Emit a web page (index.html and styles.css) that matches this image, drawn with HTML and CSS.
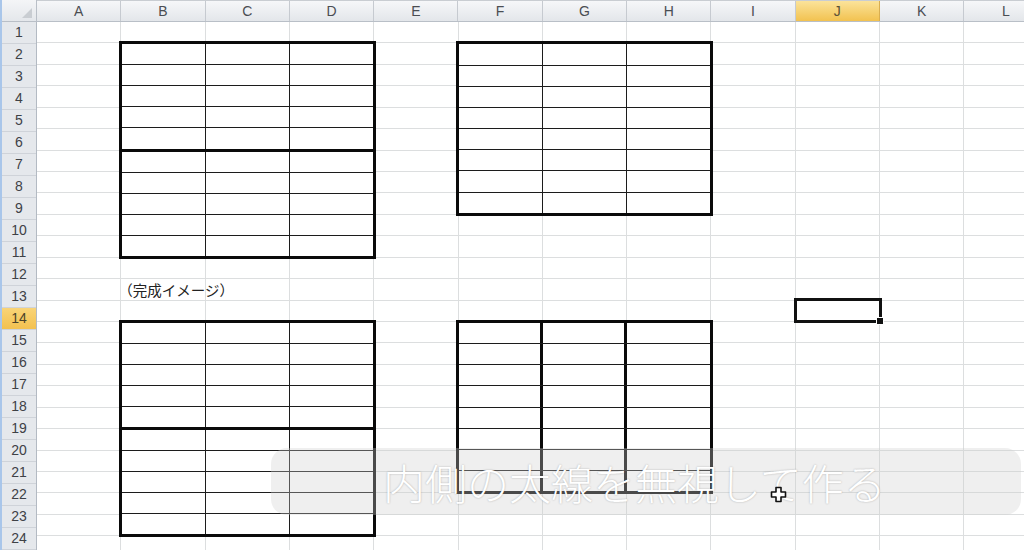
FILE: index.html
```html
<!DOCTYPE html>
<html lang="ja">
<head>
  <meta charset="UTF-8">
  <title>罫線 - Excel</title>
  <link rel="stylesheet" href="styles.css">
</head>
<body>
  <div class="sheet">
    <div class="corner"><span class="corner-mark"></span></div>

    <div class="col-heads">
      <div class="col-head">A</div>
      <div class="col-head">B</div>
      <div class="col-head">C</div>
      <div class="col-head">D</div>
      <div class="col-head">E</div>
      <div class="col-head">F</div>
      <div class="col-head">G</div>
      <div class="col-head">H</div>
      <div class="col-head">I</div>
      <div class="col-head active">J</div>
      <div class="col-head">K</div>
      <div class="col-head">L</div>
    </div>

    <div class="row-heads">
      <div class="row-head">1</div>
      <div class="row-head">2</div>
      <div class="row-head">3</div>
      <div class="row-head">4</div>
      <div class="row-head">5</div>
      <div class="row-head">6</div>
      <div class="row-head">7</div>
      <div class="row-head">8</div>
      <div class="row-head">9</div>
      <div class="row-head">10</div>
      <div class="row-head">11</div>
      <div class="row-head">12</div>
      <div class="row-head">13</div>
      <div class="row-head active">14</div>
      <div class="row-head">15</div>
      <div class="row-head">16</div>
      <div class="row-head">17</div>
      <div class="row-head">18</div>
      <div class="row-head">19</div>
      <div class="row-head">20</div>
      <div class="row-head">21</div>
      <div class="row-head">22</div>
      <div class="row-head">23</div>
      <div class="row-head">24</div>
      <div class="row-head">25</div>
    </div>

    <div class="cells">
      <!-- B2:D11 -->
      <div class="box t1">
        <div class="r"><i></i><i></i><i></i></div>
        <div class="r"><i></i><i></i><i></i></div>
        <div class="r"><i></i><i></i><i></i></div>
        <div class="r"><i></i><i></i><i></i></div>
        <div class="r split"><i></i><i></i><i></i></div>
        <div class="r"><i></i><i></i><i></i></div>
        <div class="r"><i></i><i></i><i></i></div>
        <div class="r"><i></i><i></i><i></i></div>
        <div class="r"><i></i><i></i><i></i></div>
        <div class="r"><i></i><i></i><i></i></div>
      </div>

      <!-- F2:H9 -->
      <div class="box t2">
        <div class="r"><i></i><i></i><i></i></div>
        <div class="r"><i></i><i></i><i></i></div>
        <div class="r"><i></i><i></i><i></i></div>
        <div class="r"><i></i><i></i><i></i></div>
        <div class="r"><i></i><i></i><i></i></div>
        <div class="r"><i></i><i></i><i></i></div>
        <div class="r"><i></i><i></i><i></i></div>
        <div class="r"><i></i><i></i><i></i></div>
      </div>

      <div class="label">（完成イメージ）</div>

      <!-- B15:D24 -->
      <div class="box t3">
        <div class="r"><i></i><i></i><i></i></div>
        <div class="r"><i></i><i></i><i></i></div>
        <div class="r"><i></i><i></i><i></i></div>
        <div class="r"><i></i><i></i><i></i></div>
        <div class="r split"><i></i><i></i><i></i></div>
        <div class="r"><i></i><i></i><i></i></div>
        <div class="r"><i></i><i></i><i></i></div>
        <div class="r"><i></i><i></i><i></i></div>
        <div class="r"><i></i><i></i><i></i></div>
        <div class="r"><i></i><i></i><i></i></div>
      </div>

      <!-- F15:H22 -->
      <div class="box t4">
        <div class="r"><i></i><i></i><i></i></div>
        <div class="r"><i></i><i></i><i></i></div>
        <div class="r"><i></i><i></i><i></i></div>
        <div class="r"><i></i><i></i><i></i></div>
        <div class="r"><i></i><i></i><i></i></div>
        <div class="r"><i></i><i></i><i></i></div>
        <div class="r"><i></i><i></i><i></i></div>
        <div class="r"><i></i><i></i><i></i></div>
      </div>

      <div class="active-cell"><span class="fill-handle"></span></div>
    </div>
  </div>

  <div class="subtitle">内側の太線を無視して作る</div>

  <svg class="cursor" width="17" height="17" viewBox="0 0 17 17">
    <path d="M6 1.5h5v4.5h4.5v5H11v4.5H6V11H1.5V6H6z" fill="#fff" stroke="#111" stroke-width="1.6" stroke-linejoin="round"/>
  </svg>
</body>
</html>
```

FILE: styles.css
```css
body { margin: 0; background: #fff; overflow: hidden; font-family: "Liberation Sans", Arial, sans-serif; }

.sheet { display: grid; grid-template-columns: 35px 1fr; grid-template-rows: 22px 1fr; height: 550px; border-left: 2px solid #a9c6ea; }

.corner { position: relative; background: linear-gradient(#f4f5f7, #e4e7eb); border-right: 1px solid #b9bfc7; border-bottom: 1px solid #b9bfc7; }
.corner-mark { position: absolute; right: 4px; bottom: 3px; width: 0; height: 0; border-left: 10px solid transparent; border-bottom: 10px solid #c9cdd2; }

.col-heads { display: flex; background: linear-gradient(#f6f7f9, #e3e6ea); border-bottom: 1px solid #b9bfc7; border-top: 1px solid #c9cdd2; }
.col-head { flex: 0 0 84.3px; box-sizing: border-box; border-right: 1px solid #c6cad0; text-align: center; font-size: 14px; line-height: 20px; color: #4a4d52; }
.col-head.active { background: linear-gradient(#fbe39a, #f2c250); color: #5b5137; border-right-color: #d9ae50; }

.row-heads { display: flex; flex-direction: column; background: #e5e8ec; border-right: 1px solid #b3bac3; }
.row-head { flex: 0 0 21.43px; box-sizing: border-box; border-bottom: 1px solid #cfd3d9; text-align: center; font-size: 14px; line-height: 21px; color: #3e4146; }
.row-head.active { background: linear-gradient(#f9d477, #f3c150); color: #4b4229; }

.cells {
  display: grid;
  grid-template-columns: repeat(12, 84.3px);
  grid-template-rows: repeat(25, 21.43px);
  background-image:
    repeating-linear-gradient(to right, transparent 0 83.3px, #dcdedf 83.3px 84.3px),
    repeating-linear-gradient(to bottom, transparent 0 20.43px, #dcdedf 20.43px 21.43px);
}

/* ruled boxes: thick frame, thin inner lines */
.box { display: flex; flex-direction: column; margin: -2px -2px -1px -2px; border: 3px solid #0a0a0a; background: #fff; }
.box .r { flex: 1 1 0; display: grid; grid-template-columns: repeat(3, 1fr); border-bottom: 1px solid #1c1c1c; }
.box .r:last-child { border-bottom: 0; }
.box .r.split { border-bottom: 3px solid #0a0a0a; }
.box i { border-right: 1px solid #1c1c1c; }
.box i:last-child { border-right: 0; }
.t4 i { border-right-width: 3px; border-right-color: #0a0a0a; }

.t1 { grid-column: 2 / 5; grid-row: 2 / 12; }
.t2 { grid-column: 6 / 9; grid-row: 2 / 10; }
.t3 { grid-column: 2 / 5; grid-row: 15 / 25; }
.t4 { grid-column: 6 / 9; grid-row: 15 / 23; }

.label { grid-column: 2 / 4; grid-row: 13; margin-left: -3px; font-family: "Noto Sans CJK JP", sans-serif; font-size: 14.5px; line-height: 21px; color: #222; }

.active-cell { grid-column: 10; grid-row: 14; position: relative; border: 3px solid #111; margin: -2px -2px -1px -2px; }
.fill-handle { position: absolute; right: -5px; bottom: -5px; width: 6px; height: 6px; background: #111; border: 1px solid #fff; }

.subtitle {
  position: absolute; left: 271px; top: 448px; width: 750px; height: 67px;
  box-sizing: border-box; padding-left: 112px; border-radius: 16px;
  background: rgba(205, 205, 205, 0.33);
  font-family: "Noto Sans CJK JP", sans-serif; font-weight: 300; font-size: 42px; line-height: 67px;
  color: #fff; text-shadow: 0 0 2px rgba(0, 0, 0, 0.28); white-space: nowrap;
}

.cursor { position: absolute; left: 770px; top: 486px; }
```
